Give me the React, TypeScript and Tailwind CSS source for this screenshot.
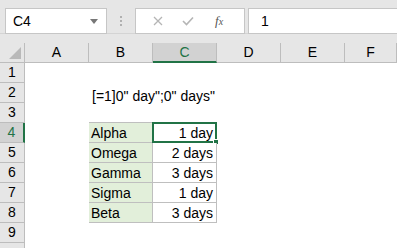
const cols = ["A", "B", "C", "D", "E", "F"];
const rows = [1, 2, 3, 4, 5, 6, 7, 8, 9, 10];

const data: Record<number, [string, string]> = {
  4: ["Alpha", "1 day"],
  5: ["Omega", "2 days"],
  6: ["Gamma", "3 days"],
  7: ["Sigma", "1 day"],
  8: ["Beta", "3 days"],
};

function Cell({ r, c }: { r: number; c: string }) {
  const item = data[r];
  if (item && c === "B") {
    return (
      <div className="flex items-center border-b border-r border-[#bfbfbf] bg-[#e2efda] pl-[2px] text-[14px] leading-none text-black">
        {item[0]}
      </div>
    );
  }
  if (item && c === "C") {
    const active = r === 4;
    return (
      <div className="relative flex items-center justify-end border-b border-r border-[#bfbfbf] bg-white pr-[3px] text-[14px] leading-none text-black">
        {item[1]}
        {active && (
          <>
            <div className="pointer-events-none absolute -left-px -top-px bottom-[-1px] right-[-1px] border-2 border-[#217346]" />
            <div className="absolute -bottom-[3px] -right-[3px] h-[6px] w-[6px] border border-white bg-[#217346]" />
          </>
        )}
      </div>
    );
  }
  if (r === 2 && c === "B") {
    return (
      <div className="relative">
        <span className="absolute left-[3px] top-[3px] whitespace-nowrap text-[14px] text-black">
          [=1]0" day";0" days"
        </span>
      </div>
    );
  }
  return <div className={r === 3 && (c === "B" || c === "C") ? "border-b border-[#bfbfbf]" : ""} />;
}

export default function App() {
  return (
    <div className="h-[248px] w-[397px] overflow-hidden bg-[#e6e6e6] font-['Liberation_Sans',sans-serif]">
      {/* formula bar */}
      <div className="flex h-[34px] items-start border-b border-[#d4d4d4] pt-[8px]">
        <div className="ml-[5px] flex h-[26px] w-[102px] items-center justify-between border border-[#c6c6c6] bg-white pl-[7px] pr-[8px] text-[14px] text-black">
          C4
          <svg width="8" height="5" viewBox="0 0 8 5">
            <path d="M0 0h8L4 5z" fill="#777" />
          </svg>
        </div>
        <div className="ml-[13px] mt-[8px] flex flex-col gap-[2px]">
          <div className="h-[2px] w-[2px] bg-[#b0b0b0]" />
          <div className="h-[2px] w-[2px] bg-[#b0b0b0]" />
          <div className="h-[2px] w-[2px] bg-[#b0b0b0]" />
        </div>
        <div className="ml-[13px] flex h-[26px] w-[110px] items-center border border-[#c6c6c6] bg-white">
          <svg className="ml-[17px]" width="10" height="10" viewBox="0 0 10 10">
            <path d="M1 1l8 8M9 1l-8 8" stroke="#b5b5b5" strokeWidth="1.3" />
          </svg>
          <svg className="ml-[19px]" width="12" height="10" viewBox="0 0 12 10">
            <path d="M1 5l3.5 3.5L11 1.5" stroke="#b5b5b5" strokeWidth="1.6" fill="none" />
          </svg>
          <span className="ml-[21px] font-['Liberation_Serif',serif] text-[13px] italic text-[#555]">
            f<span className="text-[10px]">x</span>
          </span>
        </div>
        <div className="ml-[3px] flex h-[26px] flex-1 items-center border border-r-0 border-[#c6c6c6] bg-white pl-[12px] text-[14px] text-black">
          1
        </div>
      </div>

      {/* sheet */}
      <div className="mt-[9px] grid grid-cols-[25px_64px_64px_64px_64px_64px_1fr] grid-rows-[20px] auto-rows-[20px] bg-white">
        <div className="relative border-b border-r border-[#bdbdbd] bg-[#e6e6e6]">
          <svg className="absolute bottom-[3px] right-[3px]" width="12" height="12" viewBox="0 0 12 12">
            <path d="M12 0v12H0z" fill="#b9b9b9" />
          </svg>
        </div>
        {cols.map((c) => (
          <div
            key={c}
            className={
              c === "C"
                ? "flex items-center justify-center border-b-2 border-r border-b-[#217346] border-r-[#bdbdbd] bg-[#d2d2d2] text-[14px] text-[#217346]"
                : "flex items-center justify-center border-b border-r border-[#bdbdbd] bg-[#e6e6e6] text-[14px] text-black"
            }
          >
            {c}
          </div>
        ))}
        {rows.map((r) => (
          <div key={r} className="contents">
            <div
              className={
                r === 4
                  ? "flex items-center justify-center border-b border-r-2 border-b-[#bdbdbd] border-r-[#217346] bg-[#d2d2d2] text-[14px] text-[#217346]"
                  : "flex items-center justify-center border-b border-r border-[#bdbdbd] bg-[#e6e6e6] text-[14px] text-black"
              }
            >
              {r < 10 ? r : ""}
            </div>
            {cols.map((c) => (
              <Cell key={c} r={r} c={c} />
            ))}
          </div>
        ))}
      </div>
    </div>
  );
}
